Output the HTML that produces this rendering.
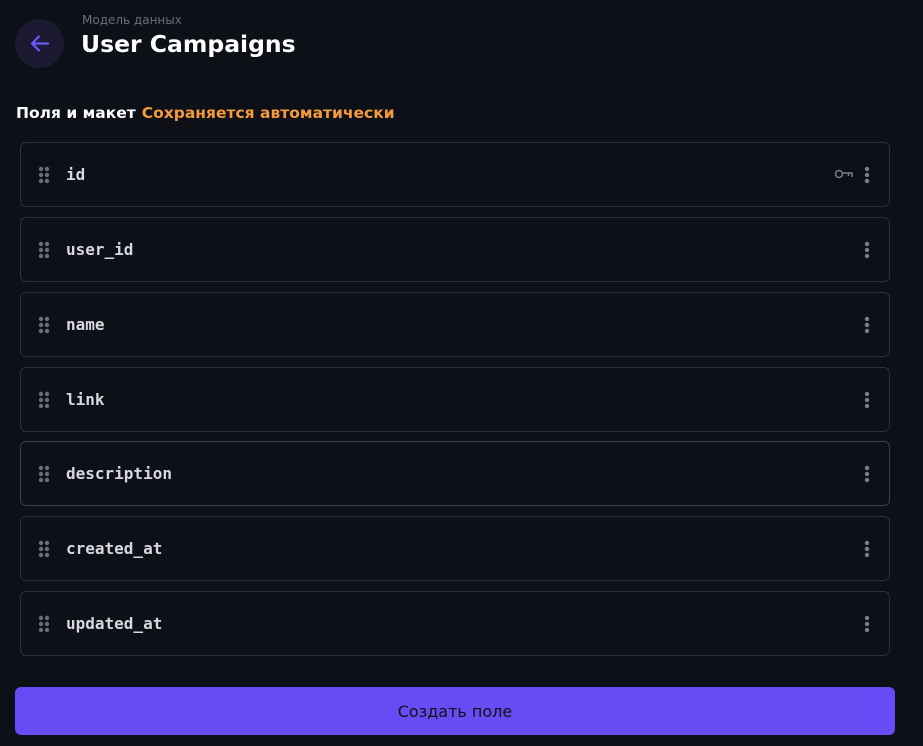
<!DOCTYPE html><html><head><style>
body{margin:0;width:923px;height:746px;background:#0d1017;font-family:"DejaVu Sans","Liberation Sans",sans-serif;position:relative;overflow:hidden}
.back{position:absolute;left:15px;top:19px;width:49px;height:49px;border-radius:50%;background:#1c1a33}
.sub{position:absolute;left:82px;top:13px;font-size:12px;color:#6b6e78}
.title{position:absolute;left:81px;top:30px;font-size:23.5px;font-weight:bold;color:#fff}
.sec{position:absolute;left:16px;top:104px;font-size:15.5px;font-weight:bold;color:#fff}
.sec span{color:#f59a3c;margin-left:6px}
.row{position:absolute;left:20px;width:868px;height:63px;border:1px solid #2c2f37;border-radius:6px}
.row .n{position:absolute;left:45px;top:22px;font-family:"DejaVu Sans Mono",monospace;font-size:16px;font-weight:bold;color:#d6d8de}
.grip{position:absolute;left:17px;top:23px;width:12px;height:18px}
.dots{position:absolute;left:843px;top:23px}
.btn{position:absolute;left:15px;top:687px;width:880px;height:48px;border-radius:6px;background:#654cf5;color:#111;font-size:16px;text-align:center;line-height:50px}
</style></head><body>
<div class="back"><svg width="49" height="49"><path d="M33 24.5H17M24 17.5l-7 7 7 7" stroke="#6d55ff" stroke-width="2.2" fill="none" stroke-linecap="round" stroke-linejoin="round"/></svg></div>
<div class="sub">Модель данных</div>
<div class="title">User Campaigns</div>
<div class="sec">Поля и макет<span>Сохраняется автоматически</span></div>
<div class="row" style="top:142px"><svg class="grip"><g fill="#6b6e78"><circle cx="3" cy="3" r="2.2"/><circle cx="9" cy="3" r="2.2"/><circle cx="3" cy="9" r="2.2"/><circle cx="9" cy="9" r="2.2"/><circle cx="3" cy="15" r="2.2"/><circle cx="9" cy="15" r="2.2"/></g></svg><div class="n">id</div><svg style="position:absolute;left:813px;top:25px" width="20" height="12"><circle cx="5" cy="6" r="3.5" stroke="#7a7e88" stroke-width="1.5" fill="none"/><path d="M8.5 5H18v4M14.5 5v3" stroke="#7a7e88" stroke-width="1.5" fill="none"/></svg><svg class="dots" width="6" height="18"><g fill="#7a7e88"><circle cx="3" cy="3" r="2.2"/><circle cx="3" cy="9" r="2.2"/><circle cx="3" cy="15" r="2.2"/></g></svg></div>
<div class="row" style="top:217px"><svg class="grip"><g fill="#6b6e78"><circle cx="3" cy="3" r="2.2"/><circle cx="9" cy="3" r="2.2"/><circle cx="3" cy="9" r="2.2"/><circle cx="9" cy="9" r="2.2"/><circle cx="3" cy="15" r="2.2"/><circle cx="9" cy="15" r="2.2"/></g></svg><div class="n">user_id</div><svg class="dots" width="6" height="18"><g fill="#7a7e88"><circle cx="3" cy="3" r="2.2"/><circle cx="3" cy="9" r="2.2"/><circle cx="3" cy="15" r="2.2"/></g></svg></div>
<div class="row" style="top:292px"><svg class="grip"><g fill="#6b6e78"><circle cx="3" cy="3" r="2.2"/><circle cx="9" cy="3" r="2.2"/><circle cx="3" cy="9" r="2.2"/><circle cx="9" cy="9" r="2.2"/><circle cx="3" cy="15" r="2.2"/><circle cx="9" cy="15" r="2.2"/></g></svg><div class="n">name</div><svg class="dots" width="6" height="18"><g fill="#7a7e88"><circle cx="3" cy="3" r="2.2"/><circle cx="3" cy="9" r="2.2"/><circle cx="3" cy="15" r="2.2"/></g></svg></div>
<div class="row" style="top:367px"><svg class="grip"><g fill="#6b6e78"><circle cx="3" cy="3" r="2.2"/><circle cx="9" cy="3" r="2.2"/><circle cx="3" cy="9" r="2.2"/><circle cx="9" cy="9" r="2.2"/><circle cx="3" cy="15" r="2.2"/><circle cx="9" cy="15" r="2.2"/></g></svg><div class="n">link</div><svg class="dots" width="6" height="18"><g fill="#7a7e88"><circle cx="3" cy="3" r="2.2"/><circle cx="3" cy="9" r="2.2"/><circle cx="3" cy="15" r="2.2"/></g></svg></div>
<div class="row" style="top:441px;border-color:#3c3f48"><svg class="grip"><g fill="#6b6e78"><circle cx="3" cy="3" r="2.2"/><circle cx="9" cy="3" r="2.2"/><circle cx="3" cy="9" r="2.2"/><circle cx="9" cy="9" r="2.2"/><circle cx="3" cy="15" r="2.2"/><circle cx="9" cy="15" r="2.2"/></g></svg><div class="n">description</div><svg class="dots" width="6" height="18"><g fill="#7a7e88"><circle cx="3" cy="3" r="2.2"/><circle cx="3" cy="9" r="2.2"/><circle cx="3" cy="15" r="2.2"/></g></svg></div>
<div class="row" style="top:516px"><svg class="grip"><g fill="#6b6e78"><circle cx="3" cy="3" r="2.2"/><circle cx="9" cy="3" r="2.2"/><circle cx="3" cy="9" r="2.2"/><circle cx="9" cy="9" r="2.2"/><circle cx="3" cy="15" r="2.2"/><circle cx="9" cy="15" r="2.2"/></g></svg><div class="n">created_at</div><svg class="dots" width="6" height="18"><g fill="#7a7e88"><circle cx="3" cy="3" r="2.2"/><circle cx="3" cy="9" r="2.2"/><circle cx="3" cy="15" r="2.2"/></g></svg></div>
<div class="row" style="top:591px"><svg class="grip"><g fill="#6b6e78"><circle cx="3" cy="3" r="2.2"/><circle cx="9" cy="3" r="2.2"/><circle cx="3" cy="9" r="2.2"/><circle cx="9" cy="9" r="2.2"/><circle cx="3" cy="15" r="2.2"/><circle cx="9" cy="15" r="2.2"/></g></svg><div class="n">updated_at</div><svg class="dots" width="6" height="18"><g fill="#7a7e88"><circle cx="3" cy="3" r="2.2"/><circle cx="3" cy="9" r="2.2"/><circle cx="3" cy="15" r="2.2"/></g></svg></div>
<div class="btn">Создать поле</div>
</body></html>
